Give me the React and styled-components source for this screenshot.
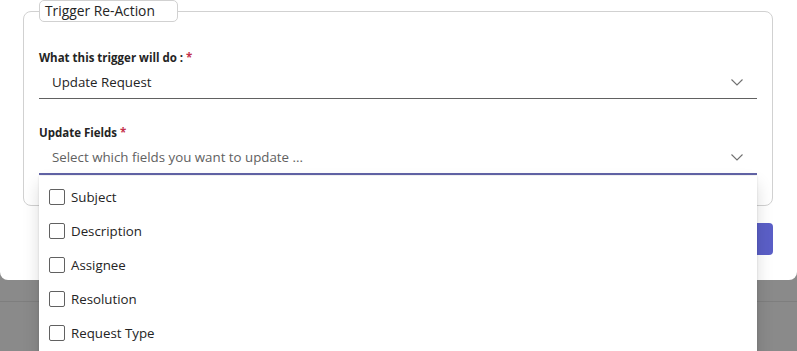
import React from "react";
import styled, { createGlobalStyle } from "styled-components";

const Global = createGlobalStyle`
  html, body { margin: 0; padding: 0; }
  body {
    background: #8a8a8a;
    font-family: "Open Sans", "Noto Sans", sans-serif;
    color: #242424;
    overflow: hidden;
  }
`;

const Page = styled.div`
  position: relative;
  width: 797px;
  height: 351px;
  overflow: hidden;
`;

const Dialog = styled.div`
  position: relative;
  background: #fff;
  height: 280px;
  box-sizing: border-box;
  border-radius: 0 0 8px 8px;
  padding: 0 24px 0 23px;
  display: flex;
  flex-direction: column;
`;

const BackdropLine = styled.div`
  height: 21px;
  border-bottom: 1px solid #7e7e7e;
`;

const Fieldset = styled.fieldset`
  margin: 0;
  border: 1px solid #d1d1d1;
  border-radius: 8px;
  padding: 0 15px 0 15px;
  min-width: 0;
  height: 206px;
  box-sizing: border-box;
`;

const Legend = styled.legend`
  font-size: 13.8px;
  line-height: 20px;
  padding: 0 22px 0 5px;
  margin-left: 0;
  border: 1px solid #d1d1d1;
  border-radius: 5px;
  color: #242424;
`;

const Label = styled.div`
  font-size: 11.5px;
  font-weight: 700;
  line-height: 16px;
  color: #242424;
  margin-top: ${(p) => p.$top}px;
`;

const Req = styled.span`
  color: #c4314b;
  margin-left: 3px;
`;

const Field = styled.div`
  position: relative;
`;

const Select = styled.div`
  height: ${(p) => (p.$active ? 34 : 33)}px;
  box-sizing: border-box;
  display: flex;
  align-items: center;
  justify-content: space-between;
  padding: 0 14px 0 13px;
  font-size: 13.3px;
  color: ${(p) => (p.$placeholder ? "#616161" : "#242424")};
  border-bottom: ${(p) => (p.$active ? "2px solid #6264a7" : "1px solid #616161")};
`;

const Chevron = () => (
  <svg width="12" height="7" viewBox="0 0 12 7" fill="none">
    <path d="M0.5 0.5l5.5 5.5 5.5-5.5" stroke="#707070" strokeWidth="1.1" />
  </svg>
);

const Listbox = styled.div`
  position: absolute;
  top: 35px;
  left: 0;
  right: 0;
  background: #fff;
  padding-top: 4px;
  box-shadow: 0 0 2px rgba(0, 0, 0, 0.12), 0 8px 16px rgba(0, 0, 0, 0.14);
  z-index: 2;
  height: 200px;
`;

const Option = styled.div`
  height: 34px;
  display: flex;
  align-items: center;
  padding-left: 10px;
  gap: 6px;
  font-size: 13.3px;
  color: #242424;
`;

const Box = styled.span`
  width: 16px;
  height: 16px;
  box-sizing: border-box;
  border: 1px solid #616161;
  border-radius: 2px;
`;

const Footer = styled.div`
  display: flex;
  justify-content: flex-end;
  margin-top: 17px;
`;

const Button = styled.button`
  height: 32px;
  min-width: 96px;
  border: none;
  border-radius: 4px;
  background: #5b5fc7;
  color: #fff;
  font-family: inherit;
  font-size: 14px;
  font-weight: 600;
`;

const options = ["Subject", "Description", "Assignee", "Resolution", "Request Type"];

export default function App() {
  return (
    <>
      <Global />
      <Page>
        <Dialog>
          <Fieldset>
            <Legend>Trigger Re-Action</Legend>
            <Label $top={28}>
              What this trigger will do :<Req>*</Req>
            </Label>
            <Field>
              <Select>
                <span>Update Request</span>
                <Chevron />
              </Select>
            </Field>
            <Label $top={26}>
              Update Fields<Req>*</Req>
            </Label>
            <Field>
              <Select $placeholder $active>
                <span>Select which fields you want to update ...</span>
                <Chevron />
              </Select>
              <Listbox>
                {options.map((o) => (
                  <Option key={o}>
                    <Box />
                    {o}
                  </Option>
                ))}
              </Listbox>
            </Field>
          </Fieldset>
          <Footer>
            <Button>Save</Button>
          </Footer>
        </Dialog>
        <BackdropLine />
      </Page>
    </>
  );
}
